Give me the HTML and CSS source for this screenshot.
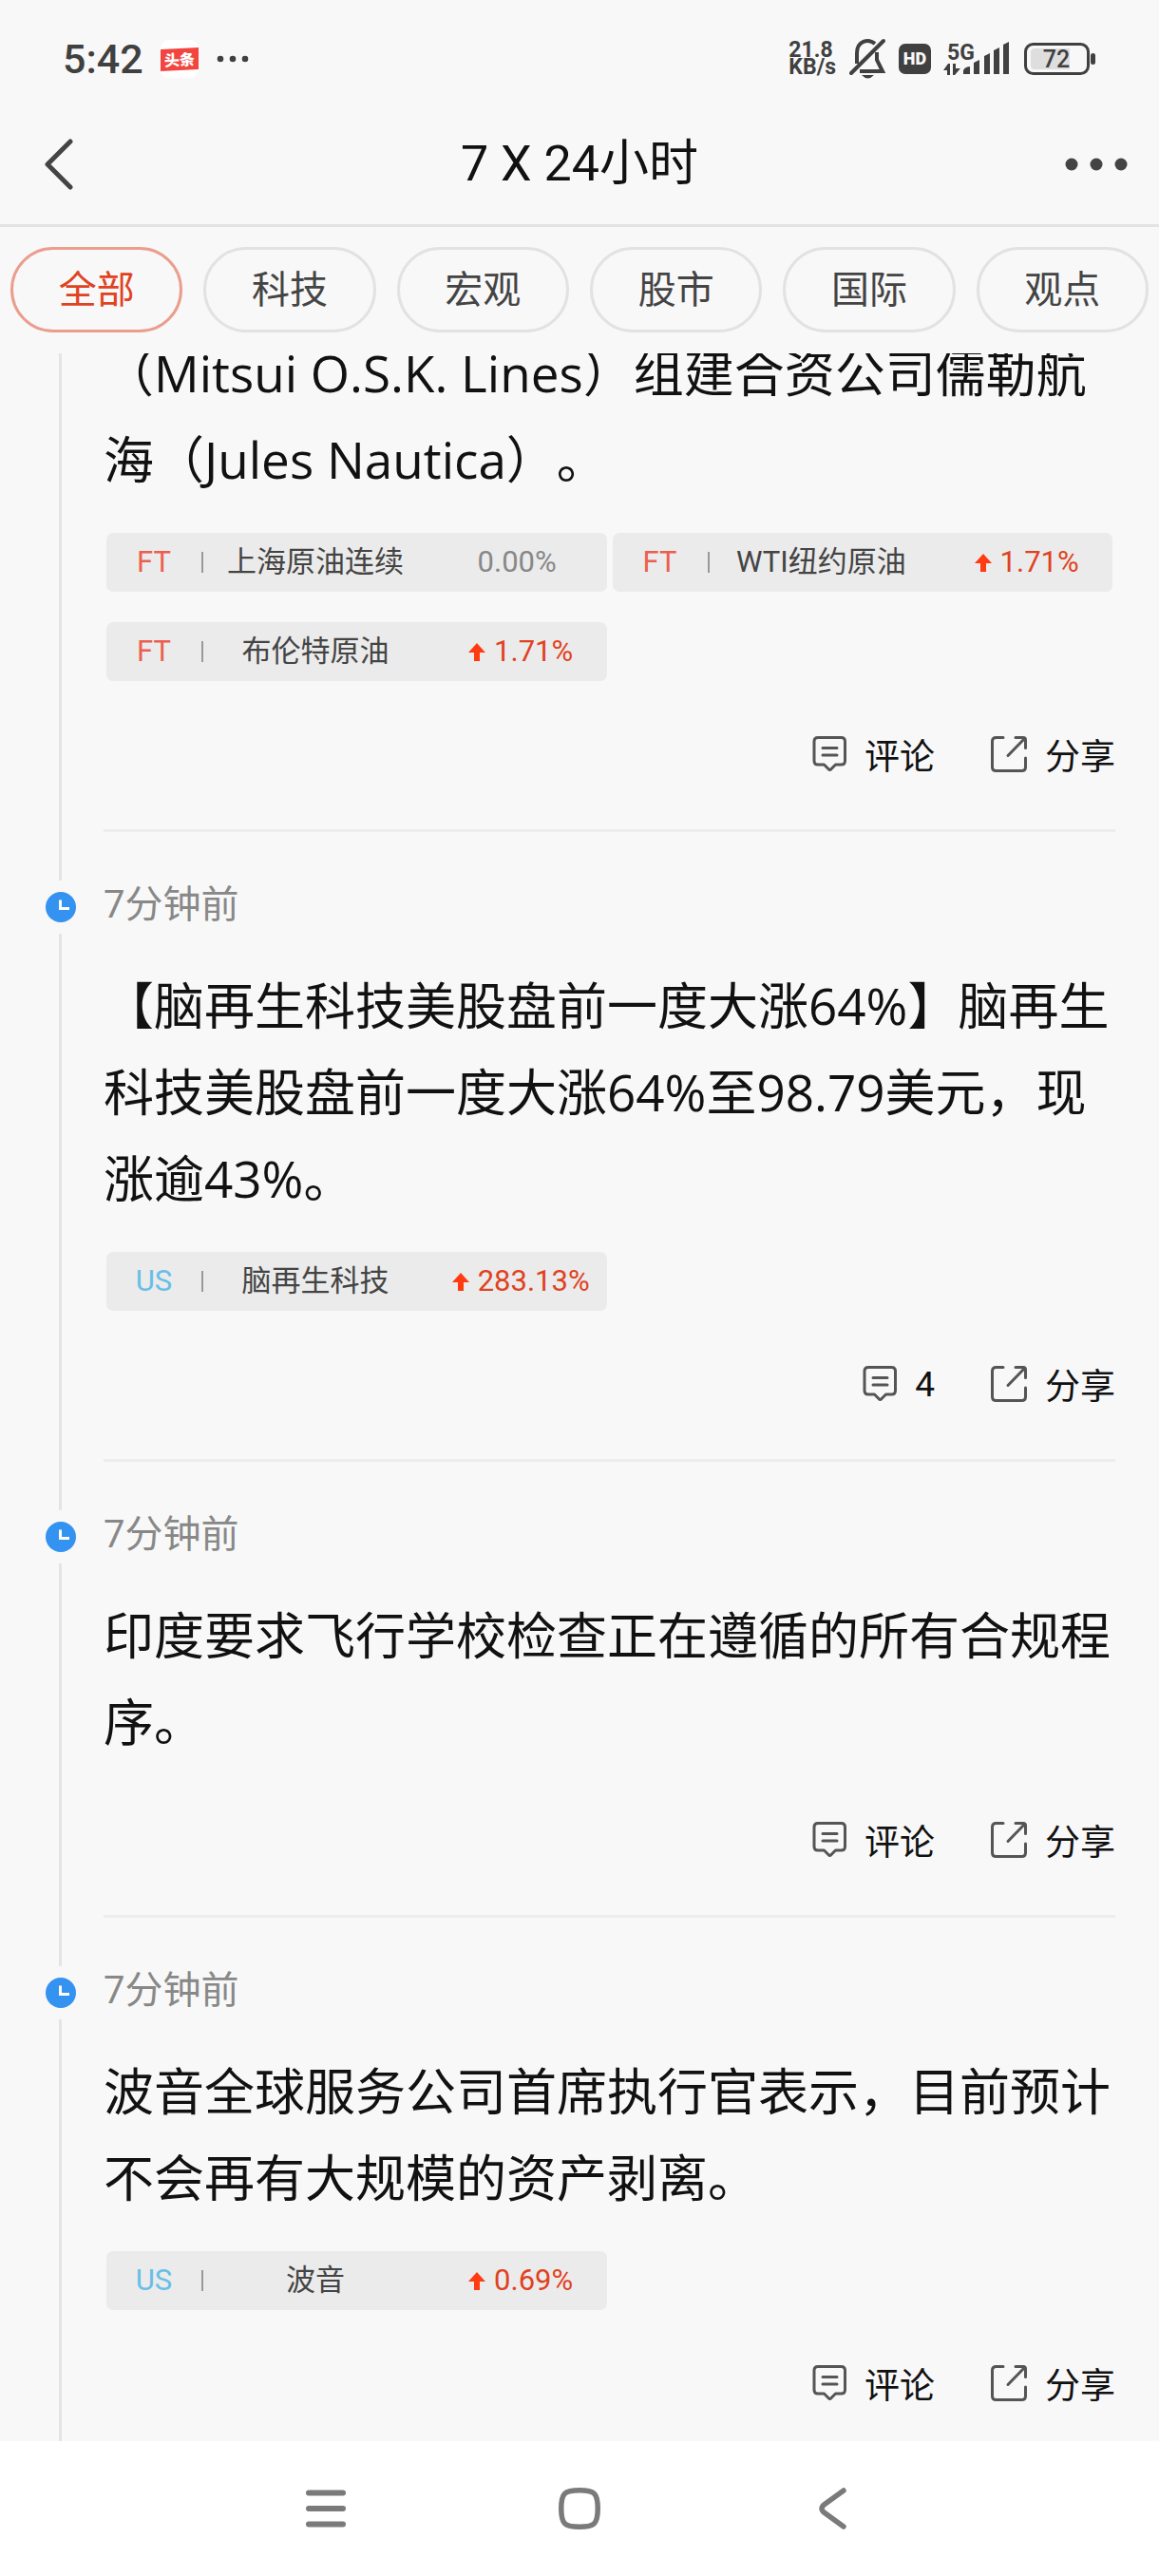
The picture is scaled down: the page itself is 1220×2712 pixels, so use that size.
FILE: index.html
```html
<!DOCTYPE html>
<html lang="zh-CN">
<head>
  <meta charset="UTF-8">
  <meta name="viewport" content="width=device-width, initial-scale=1.0">
  <title>7 X 24小时</title>
  <link rel="stylesheet" href="styles.css">
</head>
<body>
  <!-- 图标 -->
  <svg class="sprite" aria-hidden="true">
    <symbol id="icon-clock" viewBox="0 0 32 32">
      <circle cx="16" cy="16" r="16" fill="#3492f0"/>
      <path d="M15.5 8.500V17.500H25" fill="none" stroke="#fff" stroke-width="3"/>
    </symbol>
    <symbol id="icon-up" viewBox="0 0 18 19">
      <path d="M9 0L18 10H12V19H6V10H0Z" fill="#ff3b12"/>
    </symbol>
    <symbol id="icon-comment" viewBox="0 0 38 38">
      <path d="M8 1.500H32.500Q36.500 1.500 36.500 5.500V26Q36.500 30 32.500 30H26.500L21.800 34.700Q20.500 36.200 19.200 34.700L14.500 30H8Q4 30 4 26V5.500Q4 1.500 8 1.500Z"/>
      <path d="M13 12.500H28M13 20H28"/>
    </symbol>
    <symbol id="icon-share" viewBox="0 0 38 38">
      <path d="M13 1.500H5.500Q1.500 1.500 1.500 5.500V32.500Q1.500 36.500 5.500 36.500H32.500Q36.500 36.500 36.500 32.500V23"/>
      <path d="M26 1.500H34Q36.500 1.500 36.500 4V12.500M35.500 2.500L18 20.500"/>
    </symbol>
  </svg>

  <div class="app">
    <!-- 状态栏 -->
    <div class="status-bar">
      <div class="status-left">
        <span class="clock">5:42</span>
        <svg class="toutiao" width="40" height="40" viewBox="0 0 40 40">
          <rect width="40" height="40" rx="9" fill="#fff"/>
          <path d="M0 10L40 8V31L0 33Z" fill="#f34540"/>
          <text x="20" y="27" text-anchor="middle" transform="rotate(-3 20 20)">头条</text>
        </svg>
        <svg width="36" height="8" viewBox="0 0 36 8" fill="#404040">
          <circle cx="5" cy="4" r="3.300"/><circle cx="18" cy="4" r="3.300"/><circle cx="31" cy="4" r="3.300"/>
        </svg>
      </div>
      <div class="status-right">
        <div class="speed"><span>21.8</span><span>KB/s</span></div>
        <svg width="40" height="44" viewBox="0 0 40 44" fill="none" stroke="#404040" stroke-width="4">
          <path d="M9 27V16C9 3 21 0 28 6"/>
          <path d="M30 15V23L36 35H12"/>
          <path d="M37 3L3 37" stroke-linecap="round"/>
          <path d="M14 39H27Q20.500 46 14 39Z" fill="#404040" stroke="none"/>
        </svg>
        <span class="hd">HD</span>
        <svg class="signal" width="72" height="44" viewBox="0 0 72 44" fill="#404040">
          <text x="4" y="23">5G</text>
          <path d="M7 27V39H4V34H0L5 27ZM10 27H13V32H18L12 39H10Z"/>
          <path d="M21 38V34Q23 30 28 30V38ZM32 38V26L38 23V38ZM43 38V19L49 16V38ZM53 38V13L59 10V38ZM63 38V7L69 4V38Z"/>
        </svg>
        <svg class="battery" width="76" height="34" viewBox="0 0 76 34">
          <rect x="1.500" y="1.500" width="66" height="31" rx="8" fill="none" stroke="#404040" stroke-width="3"/>
          <path d="M11 6H48V28H11Q7 28 7 24V10Q7 6 11 6Z" fill="#dedede"/>
          <rect x="70" y="11" width="5" height="12" rx="2.500" fill="#404040"/>
          <text x="34" y="26" text-anchor="middle">72</text>
        </svg>
      </div>
    </div>

    <!-- 标题栏 -->
    <header class="header">
      <button class="icon-button back" aria-label="返回">
        <svg width="30" height="54" viewBox="0 0 30 54" fill="none" stroke="#444" stroke-width="5" stroke-linecap="round" stroke-linejoin="round">
          <path d="M27 3L3 27L27 51"/>
        </svg>
      </button>
      <h1 class="title">7 X 24小时</h1>
      <button class="icon-button more" aria-label="更多">
        <svg width="66" height="14" viewBox="0 0 66 14" fill="#444">
          <circle cx="7" cy="7" r="6.500"/><circle cx="33" cy="7" r="6.500"/><circle cx="59" cy="7" r="6.500"/>
        </svg>
      </button>
    </header>

    <!-- 分类 -->
    <nav class="tabs">
      <button class="tab active">全部</button>
      <button class="tab">科技</button>
      <button class="tab">宏观</button>
      <button class="tab">股市</button>
      <button class="tab">国际</button>
      <button class="tab">观点</button>
    </nav>

    <!-- 快讯列表 -->
    <main class="feed">
      <article class="post scrolled">
        <div class="rail"><span class="line"></span></div>
        <div class="content">
          <p class="text">（Mitsui O.S.K. Lines）组建合资公司儒勒航海（Jules Nautica）。</p>
          <div class="stocks">
            <a class="stock" href="#"><span class="market ft">FT</span><span class="name">上海原油连续</span><span class="change flat">0.00%</span></a>
            <a class="stock" href="#"><span class="market ft">FT</span><span class="name">WTI纽约原油</span><span class="change up"><svg class="arrow"><use href="#icon-up"/></svg>1.71%</span></a>
            <a class="stock" href="#"><span class="market ft">FT</span><span class="name">布伦特原油</span><span class="change up"><svg class="arrow"><use href="#icon-up"/></svg>1.71%</span></a>
          </div>
          <div class="actions">
            <button class="action"><svg class="action-icon"><use href="#icon-comment"/></svg>评论</button>
            <button class="action"><svg class="action-icon"><use href="#icon-share"/></svg>分享</button>
          </div>
        </div>
      </article>

      <article class="post">
        <div class="rail">
          <span class="line top"></span>
          <span class="dot"><svg width="32" height="32"><use href="#icon-clock"/></svg></span>
          <span class="line"></span>
        </div>
        <div class="content">
          <time class="time">7分钟前</time>
          <p class="text">【脑再生科技美股盘前一度大涨64%】脑再生科技美股盘前一度大涨64%至98.79美元，现涨逾43%。</p>
          <div class="stocks">
            <a class="stock" href="#"><span class="market us">US</span><span class="name">脑再生科技</span><span class="change up"><svg class="arrow"><use href="#icon-up"/></svg>283.13%</span></a>
          </div>
          <div class="actions">
            <button class="action" aria-label="评论 4"><svg class="action-icon"><use href="#icon-comment"/></svg>4</button>
            <button class="action"><svg class="action-icon"><use href="#icon-share"/></svg>分享</button>
          </div>
        </div>
      </article>

      <article class="post">
        <div class="rail">
          <span class="line top"></span>
          <span class="dot"><svg width="32" height="32"><use href="#icon-clock"/></svg></span>
          <span class="line"></span>
        </div>
        <div class="content">
          <time class="time">7分钟前</time>
          <p class="text">印度要求飞行学校检查正在遵循的所有合规程序。</p>
          <div class="actions">
            <button class="action"><svg class="action-icon"><use href="#icon-comment"/></svg>评论</button>
            <button class="action"><svg class="action-icon"><use href="#icon-share"/></svg>分享</button>
          </div>
        </div>
      </article>

      <article class="post">
        <div class="rail">
          <span class="line top"></span>
          <span class="dot"><svg width="32" height="32"><use href="#icon-clock"/></svg></span>
          <span class="line"></span>
        </div>
        <div class="content">
          <time class="time">7分钟前</time>
          <p class="text">波音全球服务公司首席执行官表示，目前预计不会再有大规模的资产剥离。</p>
          <div class="stocks">
            <a class="stock" href="#"><span class="market us">US</span><span class="name">波音</span><span class="change up"><svg class="arrow"><use href="#icon-up"/></svg>0.69%</span></a>
          </div>
          <div class="actions">
            <button class="action"><svg class="action-icon"><use href="#icon-comment"/></svg>评论</button>
            <button class="action"><svg class="action-icon"><use href="#icon-share"/></svg>分享</button>
          </div>
        </div>
      </article>
    </main>

    <!-- 系统导航 -->
    <div class="system-nav">
      <button class="icon-button" aria-label="最近任务">
        <svg width="44" height="44" viewBox="0 0 44 44" stroke="#7a7a7a" stroke-width="6" stroke-linecap="round">
          <path d="M5 5.500H41M5 22H41M5 38.500H41"/>
        </svg>
      </button>
      <button class="icon-button" aria-label="主屏幕">
        <svg width="44" height="44" viewBox="0 0 44 44" fill="none" stroke="#7a7a7a" stroke-width="5.500">
          <path d="M22 2.750C37 2.750 41.250 5 41.250 22S37 41.250 22 41.250S2.750 39 2.750 22S7 2.750 22 2.750Z"/>
        </svg>
      </button>
      <button class="icon-button" aria-label="返回上一页">
        <svg width="44" height="44" viewBox="0 0 44 44" fill="none" stroke="#7a7a7a" stroke-width="5.500" stroke-linecap="round">
          <path d="M32 3L12 17.500Q6 22 12 26.500L32 41"/>
        </svg>
      </button>
    </div>
  </div>
</body>
</html>
```

FILE: styles.css
```css
/* 全局 */
* {
  box-sizing: border-box;
}

body {
  margin: 0;
  background-color: #f8f8f8;
  color: #111;
  font-family: Roboto, "Noto Sans CJK SC", sans-serif;
}

button {
  padding: 0;
  border: none;
  background: none;
  color: inherit;
  font-family: inherit;
  cursor: pointer;
}

svg {
  display: block;
  flex-shrink: 0;
}

.sprite {
  position: absolute;
  width: 0;
  height: 0;
}

.app {
  display: flex;
  flex-direction: column;
  height: 100vh;
}

/* 状态栏 */
.status-bar {
  display: flex;
  justify-content: space-between;
  align-items: center;
  height: 108px;
  padding: 16px 66px 0;
  color: #404040;
  font-weight: 500;
}

.status-left,
.status-right {
  display: flex;
  align-items: center;
}

.status-left {
  gap: 18px;
}

.status-right {
  gap: 13px;
}

.clock {
  font-size: 43px;
}

.toutiao text {
  fill: #fff;
  font-size: 16px;
  font-weight: 900;
}

.speed {
  display: flex;
  flex-direction: column;
  font-size: 23px;
  font-weight: 700;
  line-height: 18px;
}

.hd {
  width: 34px;
  border-radius: 7px;
  background-color: #404040;
  color: #f8f8f8;
  font-size: 18px;
  font-weight: 900;
  line-height: 32px;
  text-align: center;
}

.signal text {
  font-size: 23px;
  font-weight: 700;
}

.battery text {
  fill: #404040;
  font-size: 25px;
}

/* 标题栏 */
.header {
  display: grid;
  grid-template-columns: 1fr auto 1fr;
  align-items: center;
  height: 131px;
  padding: 2px 33px 0;
  border-bottom: 3px solid #e3e3e3;
}

.back {
  justify-self: start;
  padding-left: 14px;
}

.more {
  justify-self: end;
}

.title {
  margin: 0;
  font-size: 52px;
  font-weight: 400;
  line-height: 64px;
}

/* 分类 */
.tabs {
  display: flex;
  gap: 22px;
  padding: 21px 11px 22px;
}

.tab {
  flex: 1;
  height: 90px;
  padding-bottom: 6px;
  border: 3px solid #e2e2e2;
  border-radius: 45px;
  color: #444;
  font-size: 40px;
}

.tab.active {
  border-color: #eb9d8e;
  color: #e0421f;
}

/* 快讯列表 */
.feed {
  flex: 1;
  min-height: 0;
  overflow: hidden;
}

.post {
  display: flex;
  gap: 17px;
  padding: 0 46px 0 35px;
}

/* 第一条已滚动到分类栏下方 */
.post.scrolled {
  margin-top: -25px;
}

.rail {
  display: flex;
  flex-direction: column;
  align-items: center;
  width: 57px;
}

.line {
  flex: 1;
  width: 3px;
  background-color: #e4e4e4;
}

.line.top {
  flex: none;
  height: 51px;
}

.dot {
  display: flex;
  align-items: center;
  height: 56px;
}

.content {
  flex: 1;
  min-width: 0;
  border-bottom: 3px solid #ededed;
  padding-bottom: 49px;
}

.time {
  display: block;
  margin: 49px 0 32px;
  color: #888;
  font-size: 40px;
  line-height: 56px;
}

.text {
  margin: 0;
  font-family: "Open Sans", "Noto Sans CJK SC", sans-serif;
  font-size: 53px;
  line-height: 91px;
  text-spacing-trim: space-all;
}

/* 相关股票 */
.stocks {
  display: grid;
  grid-template-columns: 1fr 1fr;
  gap: 32px 6px;
  margin-top: 32px;
  padding: 0 3px;
}

.stock {
  display: grid;
  grid-template-columns: 102px 5fr 4fr;
  align-items: center;
  height: 62px;
  border-radius: 7px;
  background-color: #ebebeb;
  color: #444;
  font-size: 31px;
  line-height: 40px;
  text-align: center;
  text-decoration: none;
}

.market {
  border-right: 2px solid #999;
  line-height: 22px;
}

.market.ft {
  color: #ec5f50;
}

.market.us {
  color: #67bfe8;
}

.change {
  display: flex;
  justify-content: center;
  align-items: center;
  gap: 9px;
}

.change.flat {
  color: #888;
}

.change.up {
  padding-left: 8px;
  color: #e0421f;
}

.arrow {
  width: 18px;
  height: 19px;
}

/* 操作 */
.actions {
  display: flex;
  justify-content: flex-end;
  gap: 59px;
  height: 60px;
  margin-top: 47px;
}

.text + .actions {
  margin-top: 49px;
}

.action {
  display: flex;
  align-items: center;
  gap: 19px;
  font-size: 37px;
}

.action-icon {
  width: 38px;
  height: 38px;
  fill: none;
  stroke: #555;
  stroke-width: 3;
  stroke-linecap: round;
  stroke-linejoin: round;
}

/* 系统导航 */
.system-nav {
  display: grid;
  grid-template-columns: repeat(3, 1fr);
  justify-items: center;
  align-items: center;
  height: 142px;
  padding: 0 17%;
  background-color: #fff;
}
```
